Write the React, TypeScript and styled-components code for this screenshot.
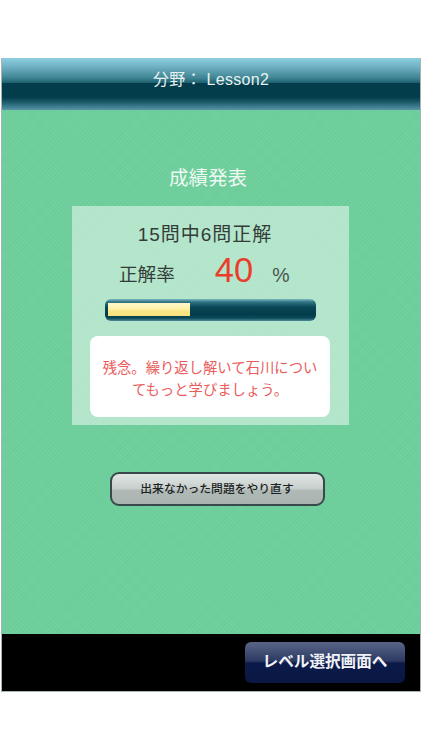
import React from "react";
import styled, { createGlobalStyle } from "styled-components";

const Global = createGlobalStyle`
  html, body { margin: 0; padding: 0; background: #fff; }
  body { font-family: "Noto Sans CJK JP", "Liberation Sans", sans-serif; }
`;

const Page = styled.div`
  width: 422px;
  height: 750px;
  padding: 58px 1px 58px;
  box-sizing: border-box;
  background: #fff;
`;

const Screen = styled.div`
  height: 634px;
  box-sizing: border-box;
  display: flex;
  flex-direction: column;
  border: solid #a8b4b4;
  border-width: 0 1px 1px;
`;

const Header = styled.header`
  height: 52px;
  flex: none;
  display: flex;
  align-items: flex-start;
  justify-content: center;
  padding-top: 11px;
  box-sizing: border-box;
  color: #e8f2f2;
  font: 400 16px/22px "Liberation Sans", "Noto Sans CJK JP", sans-serif;
  background: linear-gradient(
    180deg,
    #8ccfe0 0,
    #6fb0c2 9px,
    #3f8493 20px,
    #1f6270 24.5px,
    #033c4a 25.5px,
    #033c4a 39px,
    #1c5a68 44px,
    #3f7f92 49px,
    #5a93a4 52px
  );
`;

const HeaderLabel = styled.span`
  letter-spacing: 0.3px;
  white-space: pre;
`;

const Main = styled.main`
  flex: 1;
  display: flex;
  flex-direction: column;
  align-items: center;
  padding: 53px 0 0;
  background-color: #6ecf9c;
  background-image: repeating-linear-gradient(45deg, rgba(255,255,255,.035) 0 1px, transparent 1px 3px),
    repeating-linear-gradient(-45deg, rgba(0,90,60,.03) 0 1px, transparent 1px 3px);
`;

const Title = styled.h1`
  margin: 0 6px 15px 0;
  color: #eef8f2;
  font-size: 19.5px;
  line-height: 28px;
  font-weight: 400;
`;

const Panel = styled.section`
  width: 277px;
  height: 219px;
  box-sizing: border-box;
  margin-left: -1px;
  padding: 16px 19px 8px 18px;
  display: flex;
  flex-direction: column;
  align-items: center;
  background: rgba(255, 255, 255, 0.48);
`;

const Score = styled.div`
  height: 26px;
  margin-right: 10px;
  color: #333c38;
  font: 400 19px/26px "Liberation Sans", "Noto Sans CJK JP", sans-serif;
  letter-spacing: 1px;
  white-space: nowrap;
`;

const RateRow = styled.div`
  height: 40px;
  margin-top: 5px;
  width: 100%;
  display: flex;
  align-items: center;
  color: #333c38;
  padding-left: 29px;
  box-sizing: border-box;
`;

const RateLabel = styled.span`
  font-size: 18.6px;
  line-height: 26px;
  white-space: nowrap;
`;

const RateValue = styled.span`
  margin: 0 0 6px 40px;
  color: #ea3d2a;
  font: 400 34.5px/40px "Liberation Sans", sans-serif;
`;

const RateUnit = styled.span`
  margin-left: 19px;
  font: 400 19.5px/26px "Liberation Sans", sans-serif;
  color: #4a5450;
  padding-top: 3px;
`;

const Track = styled.div`
  width: 211px;
  height: 22px;
  margin-top: 6px;
  flex: none;
  box-sizing: border-box;
  padding: 4px 3px;
  border-radius: 6px;
  background: linear-gradient(180deg, #7fb7c2 0, #2f7484 3px, #0a4757 8px, #033c4a 15px, #0a4857 19px, #4d8a9a 22px);
`;

const Fill = styled.div`
  height: 13px;
  background: linear-gradient(180deg, #fff8cc 0, #fef3ae 5px, #f9e788 8px, #f7e27c 13px);
`;

const Message = styled.div`
  width: 240px;
  height: 81px;
  flex: none;
  margin-top: 15px;
  box-sizing: border-box;
  padding: 20px 12px 0;
  background: #fff;
  border-radius: 8px;
  color: #ea5c5c;
  font-size: 14.35px;
  line-height: 22px;
  text-align: center;
`;

const RetryButton = styled.button`
  width: 215px;
  height: 34px;
  margin: 47px 0 0 12px;
  padding: 0 0 2px;
  box-sizing: border-box;
  border: 2px solid #39484a;
  border-radius: 9px;
  color: #1c2222;
  font: 500 11.8px/26px "Noto Sans CJK JP", sans-serif;
  background: linear-gradient(180deg, #e0e6e3 0, #c6cecb 15px, #b0b9b6 16px, #a9b3b0 100%);
`;

const Footer = styled.footer`
  height: 57px;
  flex: none;
  box-sizing: border-box;
  padding: 8px 15px 8px 0;
  display: flex;
  justify-content: flex-end;
  background: #000;
`;

const LevelButton = styled.button`
  width: 160px;
  height: 41px;
  padding: 0 0 6px;
  border: 0;
  border-radius: 6px;
  color: #f1f3f8;
  font: 700 15.6px/30px "Noto Sans CJK JP", sans-serif;
  background: linear-gradient(180deg, #5a6588 0, #3d4a70 12px, #2c3a62 19px, #0b1a4a 21px, #0a1743 100%);
`;

export default function App() {
  const rate = 40;
  return (
    <Page>
      <Global />
      <Screen>
        <Header>
          <HeaderLabel>分野： Lesson2</HeaderLabel>
        </Header>
        <Main>
          <Title>成績発表</Title>
          <Panel>
            <Score>15問中6問正解</Score>
            <RateRow>
              <RateLabel>正解率</RateLabel>
              <RateValue>{rate}</RateValue>
              <RateUnit>%</RateUnit>
            </RateRow>
            <Track>
              <Fill style={{ width: `${rate}%` }} />
            </Track>
            <Message>残念。繰り返し解いて石川についてもっと学びましょう。</Message>
          </Panel>
          <RetryButton>出来なかった問題をやり直す</RetryButton>
        </Main>
        <Footer>
          <LevelButton>レベル選択画面へ</LevelButton>
        </Footer>
      </Screen>
    </Page>
  );
}
